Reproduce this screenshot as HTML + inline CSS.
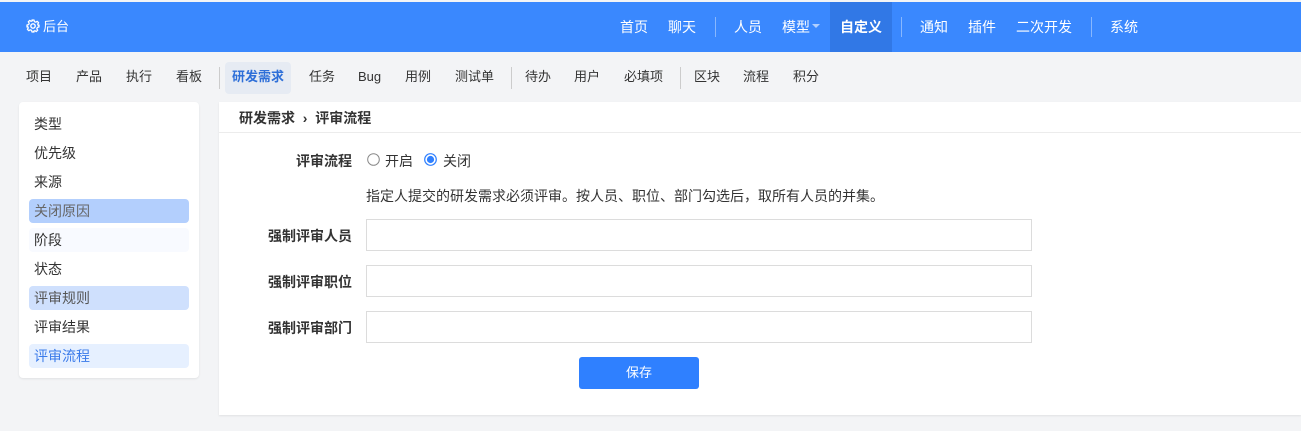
<!DOCTYPE html>
<html><head><meta charset="utf-8"><style>
*{box-sizing:border-box;margin:0;padding:0}
body{width:1301px;height:431px;overflow:hidden;background:#f3f4f6;font-family:"Liberation Sans","Noto Sans CJK SC",sans-serif;font-size:13px;color:#333;position:relative}
.abs{position:absolute;white-space:nowrap}
.top{position:absolute;left:0;top:2px;width:1301px;height:50px;background:#3a88fe;color:#fff}
.top .abs{top:17px;font-size:14px;line-height:16px}
.tdiv{position:absolute;top:15px;width:1px;height:20px;background:rgba(255,255,255,.4)}
.sub .abs{top:69px;font-size:13px;line-height:16px;color:#333}
.sdiv{position:absolute;top:67px;width:1px;height:22px;background:#ccc}
.side{position:absolute;left:19px;top:102px;width:180px;height:276px;background:#fff;border-radius:4px;box-shadow:0 1px 2px rgba(0,0,0,.08)}
.si{position:absolute;left:10px;width:160px;height:24px;border-radius:4px;padding-left:5px;line-height:24px;font-size:14px}
.main{position:absolute;left:219px;top:102px;width:1082px;height:313px;background:#fff;box-shadow:0 1px 2px rgba(0,0,0,.08)}
.lab{position:absolute;width:133px;text-align:right;font-weight:bold;font-size:14px}
.inp{position:absolute;left:147px;width:666px;height:32px;border:1px solid #dcdcdc;background:#fff}
.main .t{font-size:14px}
</style></head><body>
<div class="top">
<svg class="abs" style="left:26px;top:17px" width="14" height="14" viewBox="0 0 14 14"><circle cx="7" cy="7" r="2.2" fill="none" stroke="#fff" stroke-width="1.4"/><path d="M6 1h2l.4 1.6 1.4.6 1.4-.9 1.4 1.4-.9 1.4.6 1.4L13 6v2l-1.6.4-.6 1.4.9 1.4-1.4 1.4-1.4-.9-1.4.6L8 13H6l-.4-1.6-1.4-.6-1.4.9-1.4-1.4.9-1.4-.6-1.4L1 8V6l1.6-.4.6-1.4-.9-1.4 1.4-1.4 1.4.9 1.4-.6z" fill="none" stroke="#fff" stroke-width="1.3" stroke-linejoin="round"/></svg>
<span class="abs" style="left:43px;font-size:13px">后台</span>
<span class="abs" style="left:620px">首页</span>
<span class="abs" style="left:668px">聊天</span>
<div class="tdiv" style="left:715px"></div>
<span class="abs" style="left:734px">人员</span>
<span class="abs" style="left:782px">模型</span>
<span class="abs" style="left:812px;top:22px;width:0;height:0;border-left:4px solid transparent;border-right:4px solid transparent;border-top:4px solid rgba(255,255,255,.6)"></span>
<div class="abs" style="left:830px;top:0;width:62px;height:50px;background:#3178e6"></div>
<span class="abs" style="left:840px;font-weight:bold">自定义</span>
<div class="tdiv" style="left:901px"></div>
<span class="abs" style="left:920px">通知</span>
<span class="abs" style="left:968px">插件</span>
<span class="abs" style="left:1016px">二次开发</span>
<div class="tdiv" style="left:1091px"></div>
<span class="abs" style="left:1110px">系统</span>
</div>
<div class="sub">
<span class="abs" style="left:26px">项目</span>
<span class="abs" style="left:76px">产品</span>
<span class="abs" style="left:126px">执行</span>
<span class="abs" style="left:176px">看板</span>
<div class="sdiv" style="left:219px"></div>
<div class="abs" style="left:225px;top:62px;width:66px;height:32px;background:#e6ebf3;border-radius:4px"></div>
<span class="abs" style="left:232px;color:#2e6fd8;font-weight:bold">研发需求</span>
<span class="abs" style="left:309px">任务</span>
<span class="abs" style="left:358px">Bug</span>
<span class="abs" style="left:405px">用例</span>
<span class="abs" style="left:455px">测试单</span>
<div class="sdiv" style="left:511px"></div>
<span class="abs" style="left:525px">待办</span>
<span class="abs" style="left:574px">用户</span>
<span class="abs" style="left:624px">必填项</span>
<div class="sdiv" style="left:680px"></div>
<span class="abs" style="left:694px">区块</span>
<span class="abs" style="left:743px">流程</span>
<span class="abs" style="left:793px">积分</span>
</div>
<div class="side">
<div class="si" style="top:10px">类型</div>
<div class="si" style="top:39px">优先级</div>
<div class="si" style="top:68px">来源</div>
<div class="si" style="top:97px;background:#b3cffd;color:#666">关闭原因</div>
<div class="si" style="top:126px;background:#f8faff">阶段</div>
<div class="si" style="top:155px">状态</div>
<div class="si" style="top:184px;background:#cfe0fd;color:#555">评审规则</div>
<div class="si" style="top:213px">评审结果</div>
<div class="si" style="top:242px;background:#e6f0ff;color:#3b7bea">评审流程</div>
</div>
<div class="main">
<div class="abs" style="left:20px;top:6px;font-weight:bold;font-size:14px">研发需求 &nbsp;›&nbsp; 评审流程</div>
<div style="position:absolute;left:0;top:30px;width:100%;height:1px;background:#ececec"></div>
<div class="lab" style="left:0;top:49px">评审流程</div>
<svg class="abs" style="left:148px;top:51px" width="13" height="13"><circle cx="6.5" cy="6.5" r="5.8" fill="#fff" stroke="#888" stroke-width="1"/></svg>
<span class="abs t" style="left:166px;top:49px">开启</span>
<svg class="abs" style="left:205px;top:51px" width="13" height="13"><circle cx="6.5" cy="6.5" r="5.8" fill="#fff" stroke="#2f80ff" stroke-width="1.2"/><circle cx="6.5" cy="6.5" r="3.6" fill="#2f80ff"/></svg>
<span class="abs t" style="left:224px;top:49px">关闭</span>
<span class="abs t" style="left:147px;top:84px">指定人提交的研发需求必须评审。按人员、职位、部门勾选后，取所有人员的并集。</span>
<div class="lab" style="left:0;top:124px">强制评审人员</div><div class="inp" style="top:117px"></div>
<div class="lab" style="left:0;top:170px">强制评审职位</div><div class="inp" style="top:163px"></div>
<div class="lab" style="left:0;top:216px">强制评审部门</div><div class="inp" style="top:209px"></div>
<div class="abs" style="left:360px;top:255px;width:120px;height:32px;background:#2f80ff;border-radius:3px;color:#fff;text-align:center;line-height:32px">保存</div>
</div>
</body></html>
